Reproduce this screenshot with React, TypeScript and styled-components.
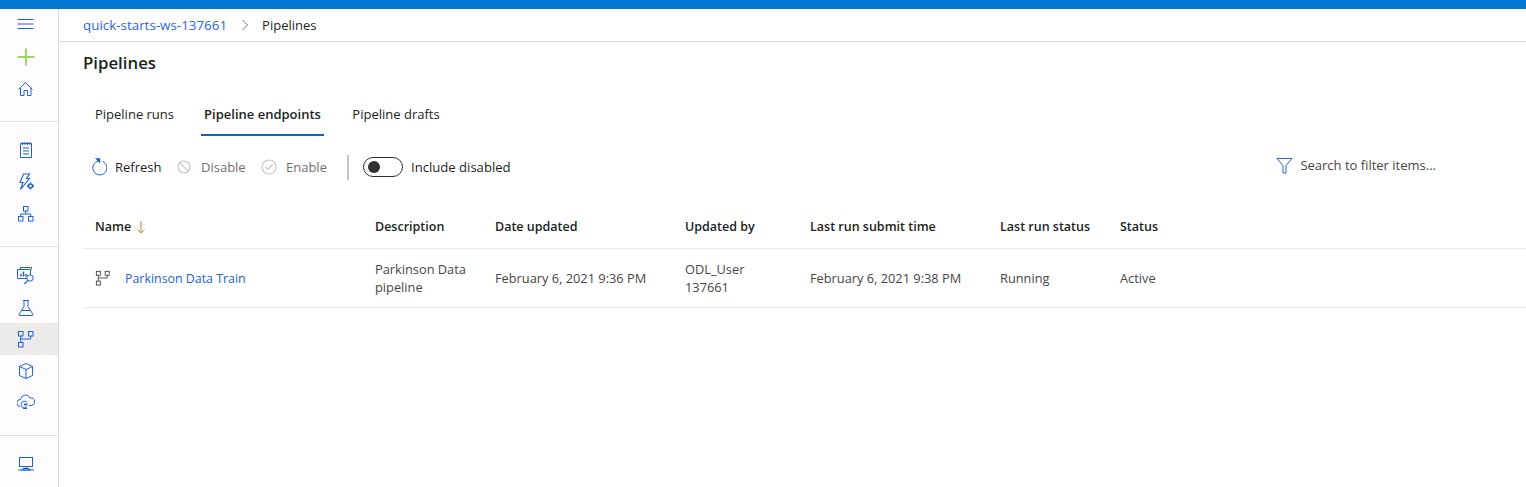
import React from "react";
import styled, { createGlobalStyle } from "styled-components";

const Global = createGlobalStyle`
  html, body { margin: 0; padding: 0; background: #fff; }
  body { font-family: "Open Sans", "Noto Sans", "Liberation Sans", sans-serif; font-size: 13px; color: #323130; overflow: hidden; }
`;

const Page = styled.div`
  width: 1526px;
  height: 487px;
  display: flex;
  flex-direction: column;
  overflow: hidden;
`;
const TopBar = styled.div`
  height: 9px;
  background: #0078d4;
  flex: none;
`;
const Body = styled.div`
  flex: 1;
  display: flex;
  min-height: 0;
`;
const Sidebar = styled.nav`
  width: 58px;
  flex: none;
  background: #fefcfe;
  border-right: 1px solid #dcdad9;
  display: flex;
  flex-direction: column;
`;
const NavGroup = styled.div<{ $height: number; $pad: number }>`
  height: ${(p) => p.$height}px;
  padding-top: ${(p) => p.$pad}px;
  box-sizing: border-box;
  border-bottom: 1px solid #e4e2e2;
  &:last-child { border-bottom: none; }
`;
const NavItem = styled.div<{ $active?: boolean; $h?: number }>`
  height: ${(p) => p.$h ?? 32}px;
  display: flex;
  align-items: center;
  padding-left: 17px;
  background: ${(p) => (p.$active ? "#edebe9" : "transparent")};
  svg { display: block; }
`;
const Main = styled.main`
  flex: 1;
  min-width: 0;
  display: flex;
  flex-direction: column;
`;
const Breadcrumb = styled.div`
  height: 33px;
  flex: none;
  box-sizing: border-box;
  border-bottom: 1px solid #dcdcdc;
  padding: 0 0 0 24px;
  display: flex;
  align-items: center;
  font-size: 13.4px;
`;
const Crumb = styled.span`
  color: #2b66d9;
`;
const CrumbCurrent = styled.span`
  color: #201f1e;
  font-size: 13px;
`;
const Chevron = styled.span`
  width: 35px;
  display: flex;
  justify-content: center;
`;
const Content = styled.div`
  padding: 0 0 0 24px;
  flex: 1;
`;
const Title = styled.h1`
  margin: 0;
  height: 44px;
  line-height: 42px;
  font-size: 16.8px;
  font-weight: 600;
  color: #201f1e;
`;
const Tabs = styled.div`
  display: flex;
  height: 50px;
  padding-top: 7px;
  box-sizing: border-box;
`;
const Tab = styled.div<{ $active?: boolean; $w: number; $ml?: number }>`
  width: ${(p) => p.$w}px;
  margin-left: ${(p) => p.$ml ?? 0}px;
  text-align: center;
  height: 43px;
  line-height: 42px;
  box-sizing: border-box;
  font-size: 13px;
  font-weight: ${(p) => (p.$active ? 600 : 400)};
  color: #201f1e;
  border-bottom: 2px solid ${(p) => (p.$active ? "#0f62d6" : "transparent")};
`;
const Toolbar = styled.div`
  height: 62px;
  display: flex;
  align-items: center;
  padding-left: 8px;
`;
const ToolButton = styled.div<{ $disabled?: boolean; $w: number; $gap: number }>`
  width: ${(p) => p.$w}px;
  display: flex;
  align-items: center;
  gap: ${(p) => p.$gap}px;
  color: ${(p) => (p.$disabled ? "#716f6e" : "#201f1e")};
  font-size: 13px;
`;
const Separator = styled.div`
  width: 2px;
  height: 25px;
  background: #c8c6c4;
  margin: 0 14px 0 10px;
`;
const Toggle = styled.div`
  width: 40px;
  height: 20px;
  box-sizing: border-box;
  border: 1px solid #323130;
  border-radius: 10px;
  padding: 3px 4px;
  margin-right: 8px;
`;
const Knob = styled.div`
  width: 12px;
  height: 12px;
  border-radius: 50%;
  background: #323130;
`;
const ToggleLabel = styled.span`
  color: #201f1e;
  font-size: 13.1px;
`;
const FilterBox = styled.div`
  margin-left: auto;
  margin-right: 90px;
  margin-top: -4px;
  display: flex;
  align-items: center;
  gap: 7px;
  color: #484644;
  font-size: 13px;
`;
const Table = styled.div`
  display: flex;
  flex-direction: column;
  margin-top: 7px;
`;
const Row = styled.div<{ $h: number }>`
  display: grid;
  grid-template-columns: 280px 120px 190px 125px 190px 120px 1fr;
  height: ${(p) => p.$h}px;
  align-items: center;
  padding-left: 12px;
  border-bottom: 1px solid #edebe9;
  box-sizing: border-box;
`;
const HeadCell = styled.div`
  font-weight: 600;
  font-size: 12.5px;
  color: #201f1e;
  display: flex;
  align-items: center;
  gap: 5px;
`;
const Cell = styled.div`
  font-size: 12.8px;
  line-height: 18px;
  color: #484644;
  padding-right: 18px;
`;
const NarrowCell = styled(Cell)`
  padding-right: 40px;
`;
const NameCell = styled.div`
  display: flex;
  align-items: center;
  gap: 14px;
`;
const LinkText = styled.span`
  color: #1b62d6;
  font-size: 12.4px;
`;

const Ico = ({ children, size = 18, color = "#1a62dc" }: { children: React.ReactNode; size?: number; color?: string }) => (
  <svg width={size} height={size} viewBox="0 0 18 18" fill="none" stroke={color} strokeWidth="1">
    {children}
  </svg>
);

const PipelineGlyph = () => (
  <>
    <rect x="1.5" y="1.5" width="4.500" height="4.500" />
    <rect x="11.5" y="1.5" width="4.500" height="4.500" />
    <rect x="1.5" y="12.5" width="4.500" height="4.500" />
    <path d="M3.700 6v6.500M3.700 9h10V6" />
  </>
);

export default function App() {
  return (
    <Page>
      <Global />
      <TopBar />
      <Body>
        <Sidebar>
          <NavGroup $height={113} $pad={0}>
            <NavItem $h={30}>
              <Ico><path d="M0.5 4.5h16M0.5 9h16M0.5 13.5h16" /></Ico>
            </NavItem>
            <NavItem $h={35}>
              <Ico color="#a2d164"><path d="M9 0.5v17M0.5 9h17" strokeWidth="2" /></Ico>
            </NavItem>
            <NavItem $h={30}>
              <Ico><path d="M1.5 9.5L8.5 2.5l7 7M3.5 8v7.5h3.5v-5h3.5v5h3.5V8" /></Ico>
            </NavItem>
          </NavGroup>
          <NavGroup $height={125} $pad={12}>
            <NavItem>
              <Ico><path d="M3.5 2.5h11v14h-11zM5.5 1v3M8 1v3M10.5 1v3M13 1v3M6 7h6M6 10h6M6 13h6" /></Ico>
            </NavItem>
            <NavItem>
              <Ico>
                <path d="M6.500 1h6L9.500 5.500h3L3.500 16.500l2.500-7H3z" strokeWidth="1.100" />
                <circle cx="13.500" cy="13" r="2" strokeWidth="1.500" />
                <path d="M13.500 9.500v1.300M13.500 15.200v1.300M10 13h1.300M15.700 13H17" strokeWidth="1.300" />
              </Ico>
            </NavItem>
            <NavItem>
              <Ico>
                <rect x="6.500" y="1.500" width="4.500" height="4.500" />
                <rect x="1.500" y="11.500" width="4.500" height="4.500" />
                <rect x="11.500" y="11.500" width="4.500" height="4.500" />
                <path d="M8.700 6v3M3.700 11.500V9h10v2.500" />
              </Ico>
            </NavItem>
          </NavGroup>
          <NavGroup $height={189} $pad={13}>
            <NavItem>
              <Ico>
                <path d="M3.500 2.500V.5h11v2" />
                <path d="M.5 2.500h13v9H.5z" />
                <path d="M4 9.500V7M6.500 9.500V4.500M9 9.500V7" strokeWidth="1.500" />
                <circle cx="13" cy="11" r="3.200" fill="#fefcfe" />
                <path d="M10.700 13.300L7.500 17" strokeWidth="1.200" />
              </Ico>
            </NavItem>
            <NavItem $h={31}>
              <Ico><path d="M6 1.500h6M7 1.500v6L2 15.500q-.3 1 .8 1h12.400q1.100 0 .8-1L11 7.500v-6M4.500 11.500h9" /></Ico>
            </NavItem>
            <NavItem $active>
              <Ico><PipelineGlyph /></Ico>
            </NavItem>
            <NavItem>
              <Ico><path d="M9 1.500l6.500 3v9L9 16.500l-6.500-3v-9zM2.500 4.500L9 7.500l6.500-3M9 7.500v9" /></Ico>
            </NavItem>
            <NavItem $h={30}>
              <Ico>
                <path d="M3 13.500A3.500 3.500 0 0 1 3.500 6.500 5 5 0 0 1 13 5a3.800 3.800 0 0 1 1.500 7.500H12" />
                <path d="M10 9.500A3.300 3.300 0 1 0 10 13.500" />
                <path d="M7 11.500h3.500" strokeWidth="1.800" />
                <path d="M6 15.500h4" />
              </Ico>
            </NavItem>
          </NavGroup>
          <NavGroup $height={51} $pad={12}>
            <NavItem>
              <Ico>
                <rect x="2.500" y="2.500" width="13" height="9" />
                <path d="M9 11.500v2M6 13.500h6l1.500 1.500h-9zM1 15h16" />
              </Ico>
            </NavItem>
          </NavGroup>
        </Sidebar>
        <Main>
          <Breadcrumb>
            <Crumb>quick-starts-ws-137661</Crumb>
            <Chevron>
              <svg width="8" height="12" viewBox="0 0 8 12" fill="none" stroke="#7a7574"><path d="M1.500 1l5 5-5 5" /></svg>
            </Chevron>
            <CrumbCurrent>Pipelines</CrumbCurrent>
          </Breadcrumb>
          <Content>
            <Title>Pipelines</Title>
            <Tabs>
              <Tab $w={103}>Pipeline runs</Tab>
              <Tab $w={123} $ml={15} $active>Pipeline endpoints</Tab>
              <Tab $w={88} $ml={28}>Pipeline drafts</Tab>
            </Tabs>
            <Toolbar>
              <ToolButton $w={86} $gap={8}>
                <svg width="16" height="18" viewBox="0 0 16 18" fill="none" stroke="#1a62dc">
                  <path d="M11.500 3.400A7 7 0 1 1 7.500 3" />
                  <path d="M4.500 .5h4.500v4.500z" fill="#1a62dc" strokeWidth=".5" />
                </svg>
                Refresh
              </ToolButton>
              <ToolButton $disabled $w={84} $gap={10}>
                <svg width="14" height="14" viewBox="0 0 14 14" fill="none" stroke="#c8c6c4" strokeWidth="1.200"><circle cx="7" cy="7" r="6" /><path d="M2.800 2.800l8.400 8.400" /></svg>
                Disable
              </ToolButton>
              <ToolButton $disabled $w={76} $gap={9}>
                <svg width="16" height="16" viewBox="0 0 16 16" fill="none" stroke="#c8c6c4" strokeWidth="1.200"><circle cx="8" cy="8" r="7" /><path d="M4.500 8l2.500 2.500 4.500-5" /></svg>
                Enable
              </ToolButton>
              <Separator />
              <Toggle><Knob /></Toggle>
              <ToggleLabel>Include disabled</ToggleLabel>
              <FilterBox>
                <svg width="17" height="17" viewBox="0 0 17 17" fill="none" stroke="#2e62d9"><path d="M1 1.500h15L10 8.500v7.500H7V8.500z" /></svg>
                Search to filter items...
              </FilterBox>
            </Toolbar>
            <Table>
              <Row $h={44}>
                <HeadCell>
                  Name
                  <svg width="10" height="14" viewBox="0 0 10 14" fill="none" stroke="#c9852f"><path d="M5 1v12M1.500 9.500L5 13l3.500-3.500" /></svg>
                </HeadCell>
                <HeadCell>Description</HeadCell>
                <HeadCell>Date updated</HeadCell>
                <HeadCell>Updated by</HeadCell>
                <HeadCell>Last run submit time</HeadCell>
                <HeadCell>Last run status</HeadCell>
                <HeadCell>Status</HeadCell>
              </Row>
              <Row $h={59}>
                <NameCell>
                  <Ico size={16} color="#484644"><PipelineGlyph /></Ico>
                  <LinkText>Parkinson Data Train</LinkText>
                </NameCell>
                <Cell>Parkinson Data pipeline</Cell>
                <Cell>February 6, 2021 9:36 PM</Cell>
                <NarrowCell>ODL_User 137661</NarrowCell>
                <Cell>February 6, 2021 9:38 PM</Cell>
                <Cell>Running</Cell>
                <Cell>Active</Cell>
              </Row>
            </Table>
          </Content>
        </Main>
      </Body>
    </Page>
  );
}
